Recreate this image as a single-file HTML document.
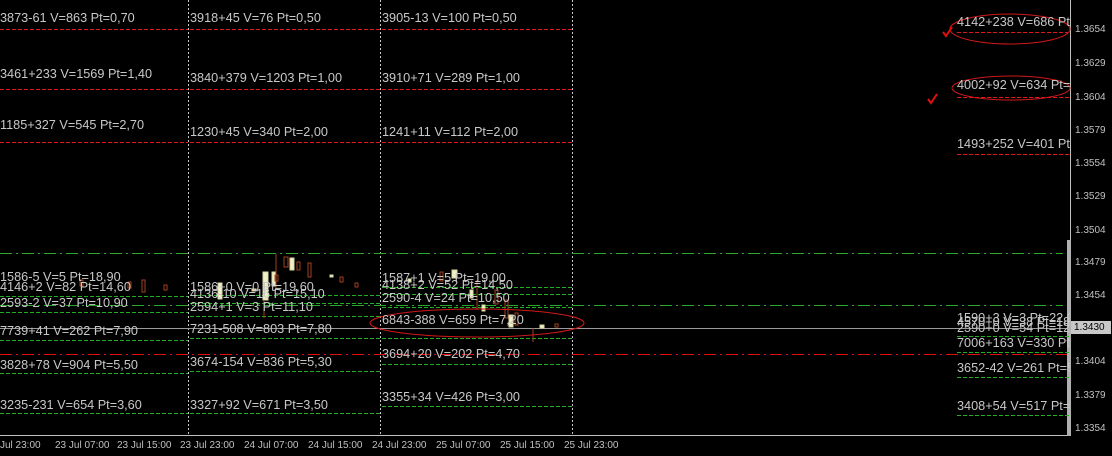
<!DOCTYPE html>
<html><head><meta charset="utf-8"><style>
body{margin:0;width:1112px;height:456px;background:#000;overflow:hidden;position:relative;font-family:"Liberation Sans",sans-serif;}
.t{position:absolute;color:#c8c8c8;font-size:12.7px;white-space:nowrap;line-height:14px;}
.l{position:absolute;height:1px;}
.r{background:repeating-linear-gradient(90deg,#e01818 0 4px,transparent 4px 6px);}
.g{background:repeating-linear-gradient(90deg,#22b022 0 4px,transparent 4px 6px);}
.dd{background:repeating-linear-gradient(90deg,#2aa82a 0 12px,transparent 12px 16px,#2aa82a 16px 18px,transparent 18px 22px);}
.rd{background:repeating-linear-gradient(90deg,#e01010 0 12px,transparent 12px 16px,#e01010 16px 18px,transparent 18px 22px);}
.v{position:absolute;top:0;height:436px;width:1px;background:repeating-linear-gradient(180deg,#c8c8c8 0 2px,transparent 2px 4px);}
.a{position:absolute;left:1075px;color:#c0c0c0;font-size:10px;line-height:11px;}
.x{position:absolute;top:440px;color:#c0c0c0;font-size:10px;}
.c{position:absolute;}
</style></head><body>
<div style="position:absolute;left:0;top:0;width:1070px;height:435px;border-right:1px solid #c0c0c0;border-bottom:1px solid #c0c0c0"></div>
<div class="v" style="left:188px"></div><div class="v" style="left:380px"></div><div class="v" style="left:572px"></div>
<div class="l dd" style="left:0;width:1063px;top:253px"></div>
<div class="l dd" style="left:0;width:1063px;top:305px"></div>
<div class="l rd" style="left:0;width:1070px;top:354px"></div>
<div class="l" style="left:0;width:1070px;top:328px;background:#9a9a9a"></div>
<div style="position:absolute;left:1067px;top:240px;width:4px;height:196px;background:#b0b0b0"></div>

<div class="l r" style="left:0;width:188px;top:29px"></div><div class="l r" style="left:190px;width:190px;top:29px"></div><div class="l r" style="left:382px;width:190px;top:29px"></div>
<div class="l r" style="left:0;width:188px;top:89px"></div><div class="l r" style="left:190px;width:190px;top:89px"></div><div class="l r" style="left:382px;width:190px;top:89px"></div>
<div class="l r" style="left:0;width:188px;top:142px"></div><div class="l r" style="left:190px;width:190px;top:142px"></div><div class="l r" style="left:382px;width:190px;top:142px"></div>
<div class="l r" style="left:957px;width:113px;top:32px"></div><div class="l r" style="left:957px;width:113px;top:97px"></div><div class="l r" style="left:957px;width:113px;top:154px"></div>

<div class="l g" style="left:0;width:188px;top:296px"></div><div class="l g" style="left:0;width:188px;top:312px"></div><div class="l g" style="left:0;width:188px;top:340px"></div><div class="l g" style="left:0;width:188px;top:373px"></div><div class="l g" style="left:0;width:188px;top:413px"></div>
<div class="l g" style="left:190px;width:190px;top:295px"></div><div class="l g" style="left:190px;width:190px;top:303px"></div><div class="l g" style="left:190px;width:190px;top:316px"></div><div class="l g" style="left:190px;width:190px;top:338px"></div><div class="l g" style="left:190px;width:190px;top:371px"></div><div class="l g" style="left:190px;width:190px;top:413px"></div>
<div class="l g" style="left:382px;width:190px;top:287px"></div><div class="l g" style="left:382px;width:190px;top:294px"></div><div class="l g" style="left:382px;width:190px;top:307px"></div><div class="l g" style="left:382px;width:190px;top:338px"></div><div class="l g" style="left:382px;width:190px;top:364px"></div><div class="l g" style="left:382px;width:190px;top:406px"></div>
<div class="l g" style="left:957px;width:113px;top:336px"></div><div class="l g" style="left:957px;width:113px;top:352px"></div><div class="l g" style="left:957px;width:113px;top:377px"></div><div class="l g" style="left:957px;width:113px;top:415px"></div>

<svg class="c" style="left:0;top:0" width="1112" height="456">
<g stroke="#d8d8a8" fill="#f0f0c8">
<rect x="218" y="283" width="4" height="16"/><rect x="272" y="272" width="4" height="14"/><rect x="290" y="258" width="4" height="12"/><rect x="263" y="272" width="5" height="28"/><rect x="452" y="270" width="5" height="8"/><rect x="540" y="325" width="4" height="3"/><rect x="252" y="289" width="4" height="2"/><rect x="330" y="275" width="3" height="2"/><rect x="470" y="290" width="3" height="8"/><rect x="408" y="279" width="3" height="3"/><rect x="482" y="305" width="3" height="6"/><rect x="509" y="315" width="4" height="12"/>
</g>
<g stroke="#a04020" fill="none">
<rect x="284" y="257" width="4" height="10"/><rect x="297" y="262" width="3" height="8"/><rect x="308" y="263" width="3" height="14"/><rect x="275" y="275" width="3" height="6"/><rect x="142" y="280" width="3" height="12"/><rect x="128" y="282" width="3" height="6"/><rect x="340" y="277" width="3" height="5"/><rect x="355" y="283" width="3" height="4"/><rect x="505" y="300" width="3" height="18"/><rect x="515" y="313" width="3" height="12"/><rect x="495" y="290" width="3" height="14"/><rect x="440" y="272" width="3" height="9"/><rect x="555" y="324" width="3" height="3"/><rect x="164" y="285" width="3" height="5"/><rect x="80" y="280" width="3" height="6"/>
<line x1="264" y1="300" x2="264" y2="318"/><line x1="276" y1="254" x2="276" y2="290"/><line x1="477" y1="280" x2="477" y2="310"/><line x1="533" y1="328" x2="533" y2="342"/>
</g>
<g fill="none" stroke="#d01818" stroke-width="1">
<ellipse cx="477" cy="323" rx="107" ry="14"/>
<ellipse cx="1010" cy="29" rx="60" ry="15"/>
<ellipse cx="1011" cy="88" rx="59" ry="12"/>
</g>
<g fill="none" stroke="#e01010" stroke-width="2"><path d="M943 32l3 4 6-9"/><path d="M928 99l3 4 6-9"/></g>
</svg>

<div class="t" style="left:0;top:11px">3873-61 V=863 Pt=0,70</div>
<div class="t" style="left:0;top:67px">3461+233 V=1569 Pt=1,40</div>
<div class="t" style="left:0;top:118px">1185+327 V=545 Pt=2,70</div>
<div class="t" style="left:0;top:270px">1586-5 V=5 Pt=18,90</div>
<div class="t" style="left:0;top:280px">4146+2 V=82 Pt=14,60</div>
<div class="t" style="left:0;top:296px">2593-2 V=37 Pt=10,90</div>
<div class="t" style="left:0;top:324px">7739+41 V=262 Pt=7,90</div>
<div class="t" style="left:0;top:358px">3828+78 V=904 Pt=5,50</div>
<div class="t" style="left:0;top:398px">3235-231 V=654 Pt=3,60</div>

<div class="t" style="left:190px;top:11px">3918+45 V=76 Pt=0,50</div>
<div class="t" style="left:190px;top:71px">3840+379 V=1203 Pt=1,00</div>
<div class="t" style="left:190px;top:125px">1230+45 V=340 Pt=2,00</div>
<div class="t" style="left:190px;top:280px">1586+0 V=0 Pt=19,60</div>
<div class="t" style="left:190px;top:287px">4136-10 V=16 Pt=15,10</div>
<div class="t" style="left:190px;top:300px">2594+1 V=3 Pt=11,10</div>
<div class="t" style="left:190px;top:322px">7231-508 V=803 Pt=7,80</div>
<div class="t" style="left:190px;top:355px">3674-154 V=836 Pt=5,30</div>
<div class="t" style="left:190px;top:398px">3327+92 V=671 Pt=3,50</div>

<div class="t" style="left:382px;top:11px">3905-13 V=100 Pt=0,50</div>
<div class="t" style="left:382px;top:71px">3910+71 V=289 Pt=1,00</div>
<div class="t" style="left:382px;top:125px">1241+11 V=112 Pt=2,00</div>
<div class="t" style="left:382px;top:271px">1587+1 V=5 Pt=19,00</div>
<div class="t" style="left:382px;top:278px">4138+2 V=52 Pt=14,50</div>
<div class="t" style="left:382px;top:291px">2590-4 V=24 Pt=10,50</div>
<div class="t" style="left:382px;top:313px">6843-388 V=659 Pt=7,20</div>
<div class="t" style="left:382px;top:347px">3694+20 V=202 Pt=4,70</div>
<div class="t" style="left:382px;top:390px">3355+34 V=426 Pt=3,00</div>

<div style="position:absolute;left:957px;top:0;width:113px;height:436px;overflow:hidden">
<div class="t" style="left:0;top:15px">4142+238 V=686 Pt=0,50</div>
<div class="t" style="left:0;top:78px">4002+92 V=634 Pt=1,00</div>
<div class="t" style="left:0;top:137px">1493+252 V=401 Pt=2,00</div>
<div class="t" style="left:0;top:311px">1590+3 V=3 Pt=22,00</div>
<div class="t" style="left:0;top:315px">4570+0 V=38 Pt=18,00</div>
<div class="t" style="left:0;top:321px">2590+0 V=54 Pt=12,00</div>
<div class="t" style="left:0;top:336px">7006+163 V=330 Pt=8,00</div>
<div class="t" style="left:0;top:361px">3652-42 V=261 Pt=5,00</div>
<div class="t" style="left:0;top:399px">3408+54 V=517 Pt=3,00</div>
</div>

<div class="a" style="top:24px">1.3654</div><div class="a" style="top:58px">1.3629</div><div class="a" style="top:92px">1.3604</div><div class="a" style="top:125px">1.3579</div><div class="a" style="top:158px">1.3554</div><div class="a" style="top:191px">1.3529</div><div class="a" style="top:225px">1.3504</div><div class="a" style="top:257px">1.3479</div><div class="a" style="top:290px">1.3454</div><div class="a" style="top:356px">1.3404</div><div class="a" style="top:390px">1.3379</div><div class="a" style="top:423px">1.3354</div>
<div class="a" style="top:321px;left:1071px;background:#c8c8c8;color:#000;padding:1px 3px;width:34px">1.3430</div>

<div class="x" style="left:0">Jul 23:00</div><div class="x" style="left:55px">23 Jul 07:00</div><div class="x" style="left:117px">23 Jul 15:00</div><div class="x" style="left:180px">23 Jul 23:00</div><div class="x" style="left:244px">24 Jul 07:00</div><div class="x" style="left:308px">24 Jul 15:00</div><div class="x" style="left:372px">24 Jul 23:00</div><div class="x" style="left:436px">25 Jul 07:00</div><div class="x" style="left:500px">25 Jul 15:00</div><div class="x" style="left:564px">25 Jul 23:00</div>
</body></html>
